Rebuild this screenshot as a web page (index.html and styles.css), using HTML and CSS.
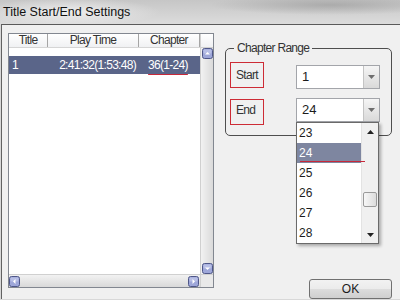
FILE: index.html
```html
<!DOCTYPE html>
<html lang="en">
<head>
    <meta charset="UTF-8">
    <title>Title Start/End Settings</title>
    <link rel="stylesheet" href="styles.css">
</head>
<body>

    <div class="titlebar">Title Start/End Settings</div>

    <div class="client">

        <!-- title list -->
        <div class="listview">
            <div class="lv-main">
                <div class="lv-head">
                    <div class="col col-title">Title</div>
                    <div class="col col-time">Play Time</div>
                    <div class="col col-chap">Chapter</div>
                </div>
                <div class="lv-row selected">
                    <div class="col col-title">1</div>
                    <div class="col col-time">2:41:32(1:53:48)</div>
                    <div class="col col-chap"><span class="mark">36(1-24)</span></div>
                </div>
            </div>
            <div class="vscroll">
                <div class="vscroll-head"></div>
                <div class="vscroll-track">
                    <svg class="sbtn" width="11" height="11" viewBox="0 0 11 11"><rect x="0.5" y="0.5" width="10" height="10" rx="2" fill="#9ea7d9" stroke="#4f5789"/><rect x="1.5" y="1.5" width="8" height="4" rx="1" fill="#b8bfe6"/><path d="M3 6.5 5.5 4 8 6.5Z" fill="#fff"/></svg>
                    <svg class="sbtn" width="11" height="11" viewBox="0 0 11 11"><rect x="0.5" y="0.5" width="10" height="10" rx="2" fill="#9ea7d9" stroke="#4f5789"/><rect x="1.5" y="1.5" width="8" height="4" rx="1" fill="#b8bfe6"/><path d="M3 4.5 5.5 7 8 4.5Z" fill="#fff"/></svg>
                </div>
            </div>
            <div class="hscroll">
                <svg class="sbtn" width="11" height="11" viewBox="0 0 11 11"><rect x="0.5" y="0.5" width="10" height="10" rx="2" fill="#9ea7d9" stroke="#4f5789"/><rect x="1.5" y="1.5" width="8" height="4" rx="1" fill="#b8bfe6"/><path d="M6.5 3 4 5.5 6.5 8Z" fill="#fff"/></svg>
                <svg class="sbtn" width="11" height="11" viewBox="0 0 11 11"><rect x="0.5" y="0.5" width="10" height="10" rx="2" fill="#9ea7d9" stroke="#4f5789"/><rect x="1.5" y="1.5" width="8" height="4" rx="1" fill="#b8bfe6"/><path d="M4.5 3 7 5.5 4.5 8Z" fill="#fff"/></svg>
            </div>
            <div class="corner"></div>
        </div>

        <!-- chapter range -->
        <div class="side">
            <fieldset class="range">
                <legend>Chapter Range</legend>
                <div class="field field-start">
                    <span class="tag">Start</span>
                    <div class="combo">
                        <span class="combo-value">1</span>
                        <span class="combo-btn"><svg width="7" height="4" viewBox="0 0 7 4"><path d="M0 0h7L3.5 4Z" fill="#6e6e6e"/></svg></span>
                    </div>
                </div>
                <div class="field field-end">
                    <span class="tag">End</span>
                    <div class="combo">
                        <span class="combo-value">24</span>
                        <span class="combo-btn"><svg width="7" height="4" viewBox="0 0 7 4"><path d="M0 0h7L3.5 4Z" fill="#6e6e6e"/></svg></span>

                        <div class="dropdown">
                            <ul class="dd-list">
                                <li>23</li>
                                <li class="current">24</li>
                                <li>25</li>
                                <li>26</li>
                                <li>27</li>
                                <li>28</li>
                            </ul>
                            <div class="dd-scroll">
                                <span class="dd-arrow"><svg width="7" height="4" viewBox="0 0 7 4"><path d="M0 4h7L3.5 0Z" fill="#222"/></svg></span>
                                <span class="dd-track"><span class="dd-thumb"></span></span>
                                <span class="dd-arrow"><svg width="7" height="4" viewBox="0 0 7 4"><path d="M0 0h7L3.5 4Z" fill="#222"/></svg></span>
                            </div>
                        </div>
                    </div>
                </div>
            </fieldset>
            <button class="ok">OK</button>
        </div>

    </div>

</body>
</html>
```

FILE: styles.css
```css
body {
    margin: 0;
    width: 400px;
    height: 300px;
    overflow: hidden;
    background: #d8d8d8;
    font-family: "Liberation Sans", Arial, sans-serif;
    font-size: 12px;
    letter-spacing: -0.7px;
    color: #1c1c1c;
}

.titlebar {
    height: 24px;
    line-height: 24px;
    padding-left: 3px;
    font-size: 12.5px;
    letter-spacing: 0;
    color: #111;
    background:
        radial-gradient(ellipse 90px 14px at 70px 12px, rgba(240,240,240,0.9), rgba(240,240,240,0)),
        radial-gradient(ellipse 120px 10px at 330px 5px, rgba(150,150,150,0.6), rgba(150,150,150,0)),
        linear-gradient(#c6c6c6, #dcdcdc);
}

.client {
    margin-left: 1px;
    height: 275px;
    box-sizing: border-box;
    border-top: 1px solid #5a5a5a;
    border-left: 1px solid #626262;
    background: #f0f0f0;
    display: flex;
    padding: 8px 0 0 6px;
}

/* list view */
.listview {
    width: 206px;
    height: 255px;
    box-sizing: border-box;
    border: 1px solid #828790;
    background: #fff;
    display: grid;
    grid-template-columns: 191px 13px;
    grid-template-rows: 240px 13px;
}
.lv-head {
    display: flex;
    height: 13px;
    line-height: 13px;
    border-bottom: 1px solid #d5d5d5;
    background: linear-gradient(#ffffff, #f0f1f3);
    color: #333;
}
.lv-head .col {
    text-align: center;
    border-right: 1px solid #a5a5a5;
    box-sizing: border-box;
}
.col-title { width: 39px; }
.col-time { width: 91px; }
.col-chap { width: 61px; }
.lv-row {
    display: flex;
    margin-top: 8px;
    height: 18px;
    line-height: 18px;
}
.lv-row .col { box-sizing: border-box; }
.lv-row .col-title { padding-left: 3px; }
.lv-row .col-time { text-align: right; padding-right: 3px; }
.lv-row .col-chap { text-align: center; padding-right: 3px; }
.selected {
    background: #5a6589;
    color: #fff;
}
.mark {
    text-decoration: underline;
    text-decoration-color: #c8283a;
    text-underline-offset: 5px;
}

.vscroll {
    display: flex;
    flex-direction: column;
    border-left: 1px solid #d0d0d0;
    background: linear-gradient(to right, #f2f2f2, #dadada);
}
.vscroll-head {
    height: 13px;
    border-bottom: 1px solid #cfcfcf;
    background: linear-gradient(#ffffff, #f0f1f3);
}
.vscroll-track {
    flex: 1;
    display: flex;
    flex-direction: column;
    justify-content: space-between;
    align-items: center;
}
.sbtn { display: block; }
.hscroll {
    display: flex;
    justify-content: space-between;
    align-items: center;
    padding: 0 1px 0 0;
    border-top: 1px solid #d0d0d0;
    background: linear-gradient(#f2f2f2, #d9d9d9);
}
.corner {
    border-top: 1px solid #d0d0d0;
    border-left: 1px solid #d0d0d0;
    background: #e9e9e9;
}

/* right side */
.side {
    margin-left: 11px;
    width: 167px;
    display: flex;
    flex-direction: column;
}
.range {
    margin: 8px 0 0;
    padding: 7px 0 10px 4px;
    width: 167px;
    box-sizing: border-box;
    border: 1px solid #4e4e4e;
    border-radius: 5px;
}
.range legend {
    margin-left: 4px;
    padding: 0 3px;
    line-height: 14px;
    color: #333;
}
.field {
    display: flex;
    align-items: flex-start;
}
.field-end { margin-top: 9px; }
.tag {
    width: 34px;
    height: 26px;
    box-sizing: border-box;
    border: 1px solid #cd2b35;
    padding-left: 5px;
    line-height: 24px;
    color: #333;
}
.field-end .tag {
    margin-top: 1px;
    line-height: 20px;
}
.field-start .combo { margin-top: 3px; }

.combo {
    position: relative;
    margin-left: 32px;
    width: 84px;
    height: 24px;
    box-sizing: border-box;
    border: 1px solid #a3a5aa;
    background: #fff;
    display: flex;
    font-size: 13px;
    letter-spacing: 0;
}
.combo-value {
    flex: 1;
    padding-left: 5px;
    line-height: 22px;
}
.combo-btn {
    width: 15px;
    border-left: 1px solid #c4c4c4;
    background: linear-gradient(#f5f5f5, #d9d9d9);
    display: flex;
    align-items: center;
    justify-content: center;
}

.dropdown {
    position: absolute;
    top: calc(100% + 1px);
    left: -1px;
    width: 83px;
    height: 122px;
    box-sizing: border-box;
    border: 1px solid #6a6a6a;
    background: #fff;
    box-shadow: 2px 2px 3px rgba(0, 0, 0, 0.3);
    display: flex;
    font-size: 12px;
    letter-spacing: 0;
}
.dd-list {
    list-style: none;
    margin: 0;
    padding: 0;
    flex: 1;
}
.dd-list li {
    position: relative;
    height: 20px;
    line-height: 20px;
    padding-left: 2px;
}
.dd-list .current {
    background: #7e86a0;
    color: #fff;
}
.dd-list .current::after {
    content: "";
    position: absolute;
    left: 3px;
    right: -4px;
    bottom: 1px;
    height: 1px;
    background: #c8283a;
}
.dd-scroll {
    width: 16px;
    display: flex;
    flex-direction: column;
    background: #f0f0f0;
    border-left: 1px solid #e3e3e3;
}
.dd-arrow {
    height: 17px;
    display: flex;
    align-items: center;
    justify-content: center;
}
.dd-track {
    flex: 1;
    display: flex;
    flex-direction: column;
    align-items: center;
}
.dd-thumb {
    margin-top: 52px;
    width: 14px;
    height: 15px;
    box-sizing: border-box;
    border: 1px solid #9a9a9a;
    border-radius: 2px;
    background: linear-gradient(to right, #f7f7f7, #dcdcdc);
}

.ok {
    margin-top: auto;
    align-self: flex-end;
    width: 83px;
    height: 20px;
    padding: 0;
    border: 1px solid #707070;
    border-radius: 3px;
    background: linear-gradient(#f2f2f2, #ebebeb 50%, #dddddd 51%, #cfcfcf);
    font-family: "Liberation Sans", Arial, sans-serif;
    font-size: 12px;
    letter-spacing: 0;
    color: #1c1c1c;
}
```
